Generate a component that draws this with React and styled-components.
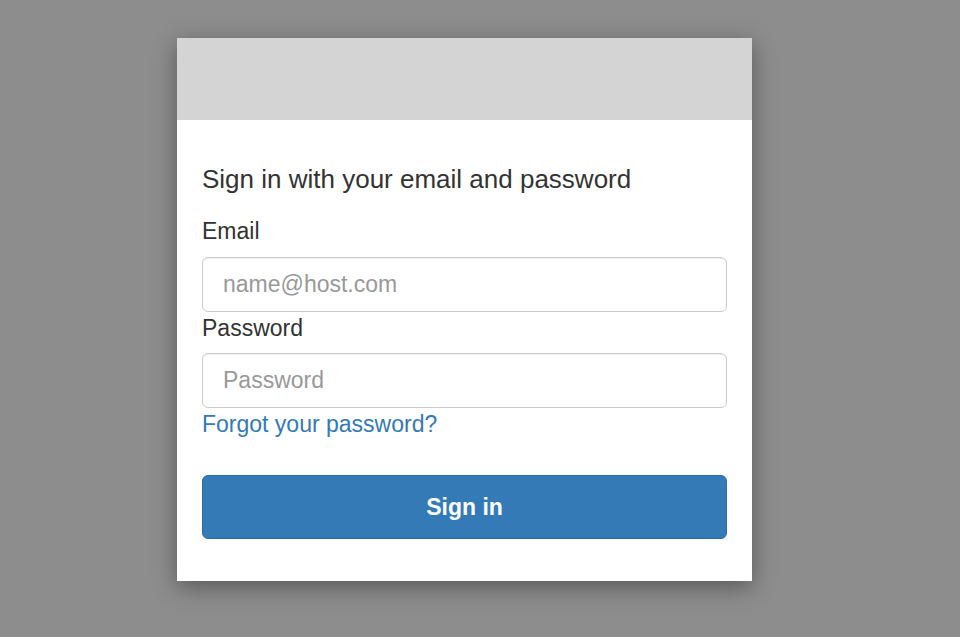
import React from "react";
import styled, { createGlobalStyle } from "styled-components";

const Global = createGlobalStyle`
  html, body { margin: 0; padding: 0; background: #8d8d8d; }
  body { font-family: "Liberation Sans", Arial, Helvetica, sans-serif; color: #333; }
  * { box-sizing: border-box; }
`;

const Page = styled.div`
  min-height: 637px;
  padding: 38px 0 0 177px;
`;

const Card = styled.div`
  width: 575px;
  background: #fff;
  box-shadow: 0 6px 22px rgba(0, 0, 0, 0.38);
  display: flex;
  flex-direction: column;
`;

const Banner = styled.div`
  height: 82px;
  background: #d4d4d4;
`;

const Body = styled.form`
  padding: 41px 25px 42px;
  display: flex;
  flex-direction: column;
`;

const Heading = styled.div`
  font-size: 26px;
  line-height: 36px;
  color: #333;
  margin-bottom: 18px;
`;

const Label = styled.label`
  font-size: 23px;
  line-height: 33px;
  color: #333;
  margin-bottom: ${(p) => p.$gap}px;
`;

const Input = styled.input`
  width: 100%;
  height: 55px;
  padding: 0 20px;
  border: 1px solid #ccc;
  border-radius: 6px;
  font-family: inherit;
  font-size: 23px;
  color: #555;
  background: #fff;
  box-shadow: inset 0 1px 1px rgba(0, 0, 0, 0.075);
  outline: none;
  &::placeholder { color: #999; }
`;

const Link = styled.a`
  font-size: 23px;
  line-height: 33px;
  color: #337ab7;
  text-decoration: none;
  align-self: flex-start;
  margin-bottom: 34px;
`;

const Button = styled.button`
  height: 64px;
  width: 100%;
  border: 1px solid #2e6da4;
  border-radius: 6px;
  background: #337ab7;
  color: #fff;
  font-family: inherit;
  font-weight: bold;
  font-size: 23px;
  cursor: pointer;
`;

export default function App() {
  return (
    <>
      <Global />
      <Page>
        <Card>
          <Banner />
          <Body onSubmit={(e) => e.preventDefault()}>
            <Heading>Sign in with your email and password</Heading>
            <Label htmlFor="email" $gap={9}>Email</Label>
            <Input id="email" type="email" placeholder="name@host.com" />
            <Label htmlFor="pw" $gap={8}>Password</Label>
            <Input id="pw" type="password" placeholder="Password" />
            <Link href="#">Forgot your password?</Link>
            <Button type="submit">Sign in</Button>
          </Body>
        </Card>
      </Page>
    </>
  );
}
